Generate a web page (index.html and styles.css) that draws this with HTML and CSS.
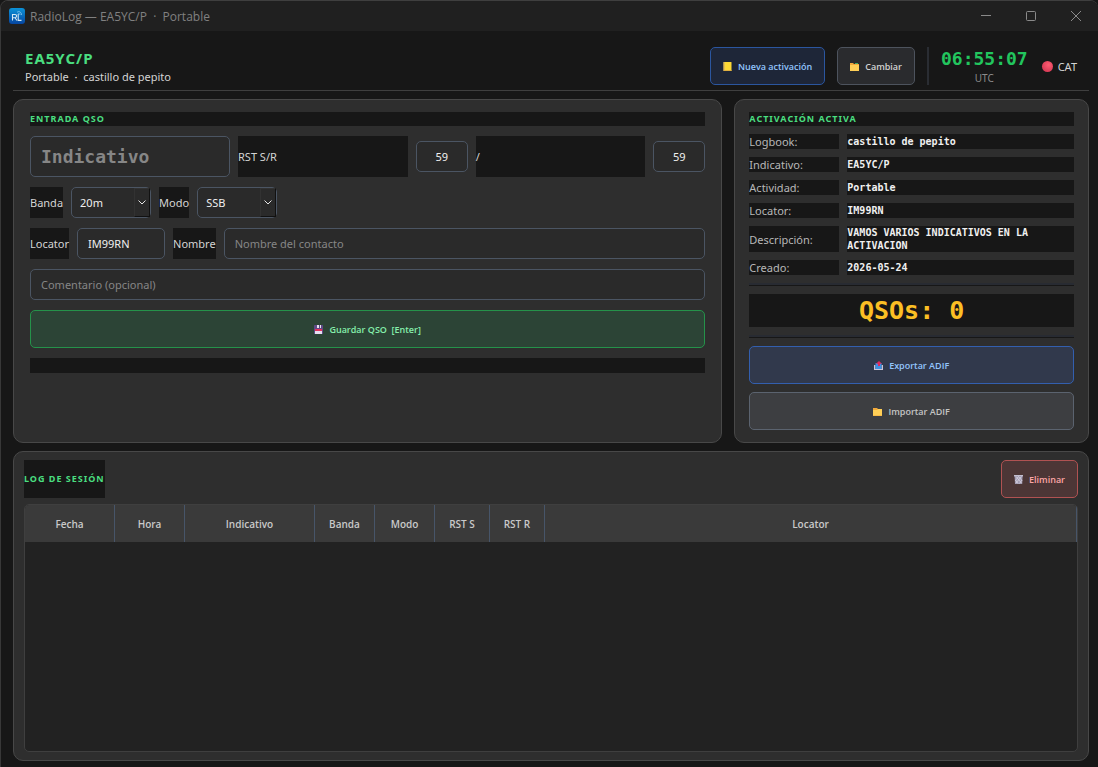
FILE: index.html
```html
<!DOCTYPE html>
<html lang="es">
<head>
    <meta charset="UTF-8">
    <meta name="viewport" content="width=device-width, initial-scale=1.0">
    <title>RadioLog — EA5YC/P · Portable</title>
    <link rel="stylesheet" href="styles.css">
</head>
<body>
    <div class="window">
        <div class="titlebar">
            <svg class="app-icon" viewBox="0 0 16 16">
                <defs>
                    <linearGradient id="app-bg" x1="0" y1="0" x2="0" y2="1">
                        <stop offset="0" stop-color="#0c93d8"/>
                        <stop offset="1" stop-color="#0645a0"/>
                    </linearGradient>
                </defs>
                <rect width="16" height="16" rx="3" fill="url(#app-bg)"/>
                <g fill="none" stroke="#d5e9f5" stroke-width="1.1">
                    <path d="M3.500 12.500V6.500H6a1.600 1.600 0 0 1 0 3.200H3.500M6 9.700l2 2.800"/>
                    <path d="M9.200 6v6.400h3.300"/>
                </g>
                <path d="M8 4.500c1.500-1.800 4.500-.6 4.500 2.500M9 6c1-.8 2-.2 2.200 1" fill="none" stroke="#8fcdf0" stroke-width=".8"/>
            </svg>
            <span class="titlebar-text">RadioLog — EA5YC/P &nbsp;·&nbsp; Portable</span>
            <button class="win-btn" aria-label="Minimizar"><svg viewBox="0 0 10 10"><path d="M0 4.500h10"/></svg></button>
            <button class="win-btn" aria-label="Maximizar"><svg viewBox="0 0 10 10"><rect x=".5" y=".5" width="9" height="9" rx="1"/></svg></button>
            <button class="win-btn" aria-label="Cerrar"><svg viewBox="0 0 10 10"><path d="M0 0l10 10M10 0L0 10"/></svg></button>
        </div>

        <header class="header">
            <div class="station">
                <h1>EA5YC/P</h1>
                <p>Portable &nbsp;·&nbsp; castillo de pepito</p>
            </div>
            <button class="btn btn-blue">
                <svg class="icon" viewBox="0 0 9 9"><rect x=".5" width="8" height="9" rx=".5" fill="#fdd835"/><path d="M1 0v9" stroke="#c9a26a"/><path d="M1 8.500h7.500" stroke="#e0b040"/></svg>
                Nueva activación
            </button>
            <button class="btn btn-gray">
                <svg class="icon" viewBox="0 0 9 9"><path d="M0 1h3l1 1h5v7H0z" fill="#f2a93b"/><path d="M5 1.500h3" stroke="#3fae6a"/><rect y="3" width="9" height="6" fill="#ffcf57"/></svg>
                Cambiar
            </button>
            <div class="divider"></div>
            <div class="clock">
                <div class="time">06:55:07</div>
                <div class="zone">UTC</div>
            </div>
            <div class="cat"><span class="cat-dot"></span>CAT</div>
        </header>

        <main class="content">
            <section class="panel entry">
                <h2 class="panel-title">ENTRADA QSO</h2>
                <div class="row">
                    <input class="field callsign" type="text" placeholder="Indicativo" aria-label="Indicativo">
                    <label class="lbl grow" for="rst-s">RST S/R</label>
                    <input class="field rst" type="text" id="rst-s" value="59">
                    <label class="lbl grow" for="rst-r">/</label>
                    <input class="field rst" type="text" id="rst-r" value="59">
                </div>
                <div class="row">
                    <label class="lbl" for="banda">Banda</label>
                    <div class="select">
                        <select class="field" id="banda"><option>20m</option></select>
                        <span class="arrow"><svg viewBox="0 0 8 5"><path d="M.5.5L4 4 7.500.5"/></svg></span>
                    </div>
                    <label class="lbl" for="modo">Modo</label>
                    <div class="select">
                        <select class="field" id="modo"><option>SSB</option></select>
                        <span class="arrow"><svg viewBox="0 0 8 5"><path d="M.5.5L4 4 7.500.5"/></svg></span>
                    </div>
                </div>
                <div class="row">
                    <label class="lbl" for="locator">Locator</label>
                    <input class="field locator" type="text" id="locator" value="IM99RN">
                    <label class="lbl" for="nombre">Nombre</label>
                    <input class="field grow" type="text" id="nombre" placeholder="Nombre del contacto">
                </div>
                <input class="field" type="text" placeholder="Comentario (opcional)" aria-label="Comentario">
                <button class="btn btn-green">
                    <svg class="icon" viewBox="0 0 9 9"><rect width="9" height="9" rx=".5" fill="#5d4a86"/><rect x="3" width="4" height="3" fill="#e8e2f0"/><rect x="5" width="1" height="3" fill="#5d4a86"/><rect x="1" y="4" width="7" height="5" fill="#e6dff0"/><rect x="1" y="4" width="7" height="2" fill="#e2305c"/></svg>
                    Guardar QSO &nbsp;[Enter]
                </button>
                <div class="status"></div>
            </section>

            <section class="panel activation">
                <h2 class="panel-title">ACTIVACIÓN ACTIVA</h2>
                <dl class="info">
                    <dt>Logbook:</dt><dd>castillo de pepito</dd>
                    <dt>Indicativo:</dt><dd>EA5YC/P</dd>
                    <dt>Actividad:</dt><dd>Portable</dd>
                    <dt>Locator:</dt><dd>IM99RN</dd>
                    <dt>Descripción:</dt><dd>VAMOS VARIOS INDICATIVOS EN LA ACTIVACION</dd>
                    <dt>Creado:</dt><dd>2026-05-24</dd>
                </dl>
                <hr>
                <div class="counter">QSOs: 0</div>
                <hr>
                <button class="btn btn-export">
                    <svg class="icon" viewBox="0 0 9 9"><path d="M0 4h1.500v5H0zM7.500 4H9v5H7.500zM1 8h7v1H1z" fill="#c9c3d6"/><path d="M1.500 2h6v6h-6z" fill="#3d8fe0"/><path d="M5 0l3 2.800H6V5H4V2.800H2z" fill="#e0285a"/></svg>
                    Exportar ADIF
                </button>
                <button class="btn btn-import">
                    <svg class="icon" viewBox="0 0 9 9"><path d="M0 1h4l1 1h4v7H0z" fill="#f2a93b"/><path d="M0 3h4l1-1h4v6.500H0z" fill="#ffcf57"/></svg>
                    Importar ADIF
                </button>
            </section>
        </main>

        <section class="panel log">
            <div class="log-head">
                <h2 class="panel-title">LOG DE SESIÓN</h2>
                <button class="btn btn-red">
                    <svg class="icon" viewBox="0 0 9 9"><path d="M0 0h9v1.500H0z" fill="#c4bfd0"/><path d="M.6 1h8L8.200 9H1z" fill="#a39db3"/><path d="M2 1.500l5.500 6.500M4.500 1.500L8 5.500M7.500 1.500L2 8M4.500 1.500L1.500 5.500M1.500 5l2.500 3.500M8 5L5.500 8.500" stroke="#dcd8e6" stroke-width=".7"/></svg>
                    Eliminar
                </button>
            </div>
            <div class="table-box">
                <table>
                    <colgroup>
                        <col class="c-fecha"><col class="c-hora"><col class="c-indicativo"><col class="c-banda"><col class="c-banda"><col class="c-rst"><col class="c-rst"><col>
                    </colgroup>
                    <thead>
                        <tr><th>Fecha</th><th>Hora</th><th>Indicativo</th><th>Banda</th><th>Modo</th><th>RST S</th><th>RST R</th><th>Locator</th></tr>
                    </thead>
                    <tbody></tbody>
                </table>
            </div>
        </section>
    </div>
</body>
</html>
```
FILE: styles.css
```css
* {
    box-sizing: border-box;
}

body {
    margin: 0;
    background-color: #171717;
    color: #d4d4d4;
    font-family: 'Noto Sans', sans-serif;
    font-size: 11px;
}

h1, h2, p, dl, dd {
    margin: 0;
}

button, input, select {
    font-family: inherit;
    font-size: inherit;
}

.window {
    min-height: 100vh;
    display: flex;
    flex-direction: column;
    border-top: 1px solid #3f3f3f;
    border-left: 1px solid #383838;
    border-radius: 8px 8px 0 0;
    padding-bottom: 6px;
    overflow: hidden;
}

/* Title bar */
.titlebar {
    display: flex;
    align-items: center;
    height: 30px;
    padding-left: 8px;
    background-color: #202020;
    color: #808080;
    font-family: 'Open Sans', sans-serif;
    font-size: 12px;
}

.app-icon {
    width: 16px;
    height: 16px;
    margin-right: 5px;
}

.titlebar-text {
    flex: 1;
}

.win-btn {
    width: 45px;
    height: 30px;
    padding: 0;
    border: none;
    background: none;
}

.win-btn svg {
    width: 10px;
    height: 10px;
    overflow: visible;
    fill: none;
    stroke: #8a8a8a;
}

/* Header */
.header {
    display: flex;
    align-items: center;
    gap: 12px;
    margin: 0 9px 8px 12px;
    padding: 15px 12px 4px;
    border-bottom: 1px solid #3f3f3f;
}

.station {
    flex: 1;
    padding-top: 2px;
}

.station h1 {
    color: #4ade80;
    font-size: 15px;
    line-height: 20px;
    letter-spacing: 1px;
}

.station p {
    line-height: 18px;
}

.divider {
    width: 2px;
    height: 38px;
    background-color: #2a2d33;
}

.clock {
    text-align: center;
}

.time {
    color: #22c55e;
    font-family: 'DejaVu Sans Mono', monospace;
    font-size: 18px;
    font-weight: bold;
    line-height: 24px;
}

.zone {
    color: #8a8a8a;
    font-size: 10px;
    line-height: 14px;
}

.cat {
    display: flex;
    align-items: center;
    gap: 5px;
    margin-left: 2px;
}

.cat-dot {
    width: 11px;
    height: 11px;
    border-radius: 50%;
    background: radial-gradient(circle at 60% 35%, #ff5c72, #c92f4c);
}

/* Buttons */
.btn {
    display: flex;
    align-items: center;
    justify-content: center;
    gap: 6px;
    height: 38px;
    padding: 0 12px;
    border: 1px solid;
    border-radius: 5px;
    font-family: 'Open Sans', sans-serif;
    font-size: 9px;
    font-weight: 600;
}

.icon {
    width: 9px;
    height: 9px;
}

.btn-blue {
    background-color: #1e2638;
    border-color: #2b569f;
    color: #93c5fd;
}

.btn-gray {
    background-color: #2a2b2e;
    border-color: #4d535d;
    color: #d1d1d1;
}

.btn-green {
    background-color: #2c4436;
    border-color: #25924a;
    color: #86efac;
}

.btn-export {
    background-color: #31394c;
    border-color: #335fae;
    color: #93c5fd;
}

.btn-import {
    background-color: #3d3e41;
    border-color: #5b636f;
    color: #c4c4c4;
}

.btn-red {
    background-color: #4c3636;
    border-color: #b05252;
    color: #fca5a5;
}

/* Panels */
.content {
    display: grid;
    grid-template-columns: 2fr 1fr;
    gap: 12px;
    margin: 0 9px 8px 12px;
}

.panel {
    display: flex;
    flex-direction: column;
    background-color: #2e2e2e;
    border: 1px solid #484848;
    border-radius: 10px;
}

.panel-title {
    background-color: #171717;
    color: #4ade80;
    font-size: 9px;
    font-weight: 700;
    line-height: 14px;
    letter-spacing: 1px;
}

.entry {
    gap: 10px;
    padding: 12px 16px;
}

.activation {
    gap: 8px;
    padding: 12px 14px;
}

.row {
    display: flex;
    align-items: center;
    gap: 8px;
}

.lbl {
    display: flex;
    align-items: center;
    align-self: stretch;
    background-color: #171717;
}

.field {
    height: 31px;
    padding: 0 10px;
    border: 1px solid #4b5563;
    border-radius: 5px;
    background-color: #2a2a2a;
    color: #f0f0f0;
}

.field::placeholder {
    color: #868686;
}

.grow {
    flex: 1;
}

.callsign {
    width: 200px;
    height: 41px;
    font-family: 'DejaVu Sans Mono', monospace;
    font-size: 18px;
    font-weight: bold;
}

.rst {
    width: 52px;
    text-align: center;
}

.locator {
    width: 88px;
}

.select {
    position: relative;
    width: 80px;
}

.select .field {
    width: 100%;
    padding: 0 8px;
    appearance: none;
}

/* raised drop-down button over the right end of the select */
.arrow {
    position: absolute;
    top: 1px;
    right: 1px;
    bottom: 1px;
    width: 16px;
    display: flex;
    align-items: center;
    justify-content: center;
    background-color: #2a2a2a;
    border: 1px solid #323232;
    border-right-color: #111;
    border-bottom-color: #111;
    pointer-events: none;
}

.arrow svg {
    width: 8px;
    height: 5px;
    fill: none;
    stroke: #e5e5e5;
}

.status {
    height: 15px;
    background-color: #171717;
}

.info {
    display: grid;
    grid-template-columns: 90px 1fr;
    gap: 8px;
}

.info dt,
.info dd {
    display: flex;
    align-items: center;
    min-height: 15px;
    background-color: #171717;
    line-height: 13px;
}

.info dt {
    color: #b8b8b8;
}

.info dd {
    color: #f0f0f0;
    font-family: 'DejaVu Sans Mono', monospace;
    font-size: 10px;
    font-weight: bold;
}

hr {
    width: 100%;
    height: 3px;
    margin: 0;
    border: none;
    background-color: #282b32;
    border-bottom: 1px solid #171717;
}

.counter {
    background-color: #171717;
    color: #fbbf24;
    font-family: 'DejaVu Sans Mono', monospace;
    font-size: 25px;
    font-weight: bold;
    line-height: 33px;
    text-align: center;
}

/* Session log */
.log {
    flex: 1;
    gap: 6px;
    margin: 0 9px 0 12px;
    padding: 8px 10px;
}

.log-head {
    display: flex;
    justify-content: space-between;
}

.log-head .panel-title {
    line-height: 38px;
}

.table-box {
    flex: 1;
    background-color: #222;
    border: 1px solid #3f3f3f;
    border-radius: 5px;
    overflow: hidden;
}

table {
    width: 100%;
    table-layout: fixed;
    border-collapse: separate;
    border-spacing: 0;
}

th {
    height: 37px;
    padding: 0;
    background-color: #3a3a3a;
    border-right: 1px solid #475569;
    color: #c9c9c9;
    font-family: 'Open Sans', sans-serif;
    font-size: 10px;
    font-weight: 600;
}

.c-fecha {
    width: 90px;
}

.c-hora {
    width: 70px;
}

.c-indicativo {
    width: 130px;
}

.c-banda {
    width: 60px;
}

.c-rst {
    width: 55px;
}
```
